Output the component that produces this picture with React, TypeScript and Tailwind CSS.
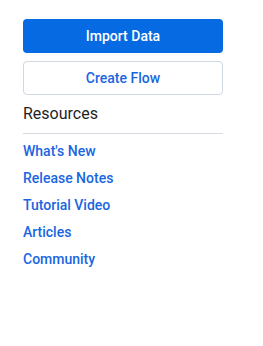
import React from "react";

export default function App() {
  const links = ["What's New", "Release Notes", "Tutorial Video", "Articles", "Community"];
  return (
    <div className="w-[263px] h-[346px] bg-white pt-[19px] px-[23px]" style={{ fontFamily: "Roboto, 'Liberation Sans', sans-serif" }}>
      <div className="w-[200px] flex flex-col">
        <button className="h-[34px] w-full rounded-[4px] bg-[#066be3] text-white text-[14px] font-medium">Import Data</button>
        <button className="mt-[8px] h-[34px] w-full rounded-[4px] border border-[#cfd8e3] bg-white text-[#1a66e0] text-[14px] font-medium">Create Flow</button>
        <div className="mt-[9px] text-[16px] leading-[20px] text-[#1f1f1f] pb-[9px] border-b border-[#d5dbe1]">Resources</div>
        <div className="flex flex-col mt-[8px] gap-[9px]">
          {links.map((l) => (
            <a key={l} className="text-[14px] leading-[18px] font-medium text-[#1a66e0]">{l}</a>
          ))}
        </div>
      </div>
    </div>
  );
}
